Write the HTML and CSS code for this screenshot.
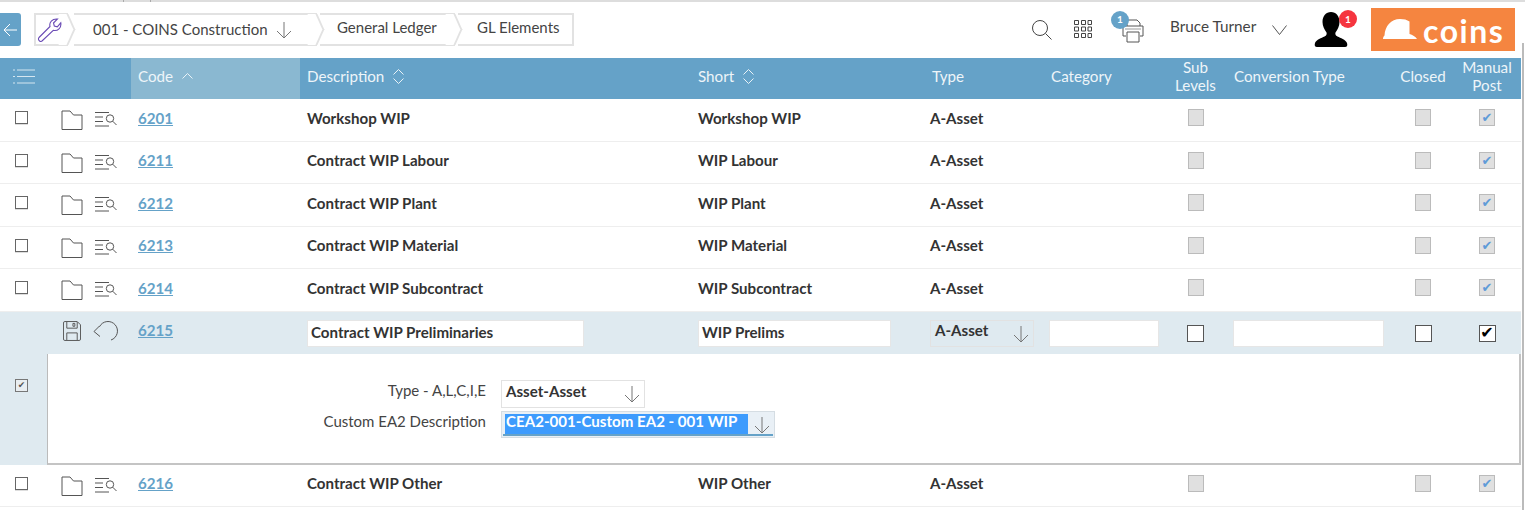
FILE: index.html
```html
<!DOCTYPE html>
<html lang="en">
<head>
  <meta charset="UTF-8">
  <title>GL Elements</title>
  <link rel="stylesheet" href="styles.css">
</head>
<body>

  <svg class="defs" width="0" height="0">
    <symbol id="folder" viewBox="0 0 22 20">
      <path d="M1 19.5V1h8l3.500 4H21v14.500z" fill="none" stroke="#555" stroke-width="1"/>
    </symbol>
    <symbol id="listsearch" viewBox="0 0 22 16">
      <path d="M0 1.500h14M0 6h8M0 10.500h8M0 15h14" fill="none" stroke="#555" stroke-width="1"/>
      <circle cx="15" cy="7.500" r="3.700" fill="none" stroke="#555"/>
      <path d="M17.700 10.200l3.800 3.800" stroke="#555" fill="none"/>
    </symbol>
    <symbol id="arrowdown" viewBox="0 0 16 18">
      <path d="M8 1v16M1 10l7 7 7-7" fill="none" stroke="#777" stroke-width="1"/>
    </symbol>
  </svg>

  <div class="topstrip"></div>
  <div class="pageedge"></div>

  <header class="topbar">
    <a class="backbtn">
      <svg width="14" height="14" viewBox="0 0 14 14"><path d="M14 7H1M7 1L1 7l6 6" fill="none" stroke="#fff"/></svg>
    </a>
    <nav class="crumbs">
      <div class="crumb crumb-tool">
        <svg width="25" height="25" viewBox="0 0 25 25"><path d="M2 20.500L13 9.500C12 5.500 15 1.500 20.500 2L16.500 6l.8 3 3 .8 3.500-4c.8 5-3 8.500-7.500 7.500L5 24c-2 1.500-4.500-1.500-3-3.500z" fill="none" stroke="#6a4bb5" stroke-width="1.100"/></svg>
      </div>
      <div class="crumb crumb-company">
        <span>001 - COINS Construction</span>
        <svg class="crumb-arrow" width="16" height="18"><use href="#arrowdown"/></svg>
      </div>
      <div class="crumb crumb-ledger"><span>General Ledger</span></div>
      <div class="crumb crumb-last"><span>GL Elements</span></div>
    </nav>

    <div class="tools">
      <svg class="tool-search" width="22" height="22" viewBox="0 0 22 22"><circle cx="9" cy="9" r="7.500" fill="none" stroke="#444"/><path d="M14.500 14.500l6 6" stroke="#444" fill="none"/></svg>
      <svg class="tool-grid" width="18" height="18" viewBox="0 0 18 18" fill="none" stroke="#444">
        <path d="M.5.500h4v4h-4zM7.500.500h4v4h-4zM14 .5h3.500v4H14zM.5 7h4v4h-4zM7.500 7h4v4h-4zM14 7h3.500v4H14zM.5 13.500h4v4h-4zM7.500 13.500h4v4h-4zM14 13.500h3.500v4H14z"/>
      </svg>
      <div class="printer">
        <svg width="22" height="24" viewBox="0 0 22 24" fill="none" stroke="#555">
          <path d="M5 7V1h10l3 3v3M4 17H1V7h20v10h-3"/>
          <path d="M5 13h12v10H5z" fill="#fff"/>
          <path d="M3 10h16" stroke="#999"/>
        </svg>
        <span class="printer-badge">1</span>
      </div>
      <div class="username">Bruce Turner</div>
      <svg class="tool-chevron" width="15" height="10" viewBox="0 0 15 10"><path d="M.5.500l7 9 7-9" fill="none" stroke="#555"/></svg>
      <div class="user">
        <svg width="34" height="36" viewBox="0 0 34 36"><path d="M17 0c5 0 8.500 4 8.500 10 0 4-2 8-4 10.500-.5 1.500 0 3 2 4 3 1.500 8 3 9.500 6.500.8 2.500 0 4-2 4H3c-2 0-2.800-1.500-2-4 1.500-3.500 6.500-5 9.500-6.500 2-1 2.500-2.500 2-4-2-2.500-4-6.500-4-10.500C8.500 4 12 0 17 0z" fill="#000"/></svg>
        <span class="user-badge">1</span>
      </div>
      <div class="logo">
        <svg width="34" height="20" viewBox="0 0 34 20"><path d="M0 20c0-1.500.5-2.500 1.500-3.500C2 7 8 0 17 0c4 0 7 .8 9.500 2.500V15c3 1 6 2.500 7.500 5z" fill="#fff"/></svg>
        <span class="logo-text">coins</span>
      </div>
    </div>
  </header>

  <div class="frame">
    <div class="row headrow">
      <div class="cell head-menu">
        <svg width="22" height="15" viewBox="0 0 22 15"><path d="M0 1h2M4 1h18M0 7.500h2M4 7.500h18M0 14h2M4 14h18" stroke="#d5e6f0" fill="none"/></svg>
      </div>
      <div class="cell"></div>
      <div class="cell head-active">Code
        <svg class="sort" width="11" height="6" viewBox="0 0 11 6"><path d="M.5 5.500l5-5 5 5" fill="none" stroke="#e8f2f7"/></svg>
      </div>
      <div class="cell">Description
        <svg class="sort" width="11" height="15" viewBox="0 0 11 15"><path d="M.5 5.500l5-5 5 5M.5 9.500l5 5 5-5" fill="none" stroke="#e8f2f7"/></svg>
      </div>
      <div class="cell">Short
        <svg class="sort" width="11" height="15" viewBox="0 0 11 15"><path d="M.5 5.500l5-5 5 5M.5 9.500l5 5 5-5" fill="none" stroke="#e8f2f7"/></svg>
      </div>
      <div class="cell head-type">Type</div>
      <div class="cell">Category</div>
      <div class="cell cell-mid">Sub<br>Levels</div>
      <div class="cell cell-conv">Conversion Type</div>
      <div class="cell cell-mid">Closed</div>
      <div class="cell cell-mid">Manual<br>Post</div>
    </div>

    <div class="row">
      <div class="cell cell-tick"><span class="check"></span></div>
      <div class="cell cell-actions"><svg class="ic-folder"><use href="#folder"/></svg><svg class="ic-list"><use href="#listsearch"/></svg></div>
      <div class="cell"><a class="code">6201</a></div>
      <div class="cell">Workshop WIP</div>
      <div class="cell">Workshop WIP</div>
      <div class="cell">A-Asset</div>
      <div class="cell"></div>
      <div class="cell cell-mid"><span class="check-off"></span></div>
      <div class="cell"></div>
      <div class="cell cell-mid"><span class="check-off"></span></div>
      <div class="cell cell-mid"><span class="check-off is-on">✔</span></div>
    </div>

    <div class="row">
      <div class="cell cell-tick"><span class="check"></span></div>
      <div class="cell cell-actions"><svg class="ic-folder"><use href="#folder"/></svg><svg class="ic-list"><use href="#listsearch"/></svg></div>
      <div class="cell"><a class="code">6211</a></div>
      <div class="cell">Contract WIP Labour</div>
      <div class="cell">WIP Labour</div>
      <div class="cell">A-Asset</div>
      <div class="cell"></div>
      <div class="cell cell-mid"><span class="check-off"></span></div>
      <div class="cell"></div>
      <div class="cell cell-mid"><span class="check-off"></span></div>
      <div class="cell cell-mid"><span class="check-off is-on">✔</span></div>
    </div>

    <div class="row">
      <div class="cell cell-tick"><span class="check"></span></div>
      <div class="cell cell-actions"><svg class="ic-folder"><use href="#folder"/></svg><svg class="ic-list"><use href="#listsearch"/></svg></div>
      <div class="cell"><a class="code">6212</a></div>
      <div class="cell">Contract WIP Plant</div>
      <div class="cell">WIP Plant</div>
      <div class="cell">A-Asset</div>
      <div class="cell"></div>
      <div class="cell cell-mid"><span class="check-off"></span></div>
      <div class="cell"></div>
      <div class="cell cell-mid"><span class="check-off"></span></div>
      <div class="cell cell-mid"><span class="check-off is-on">✔</span></div>
    </div>

    <div class="row">
      <div class="cell cell-tick"><span class="check"></span></div>
      <div class="cell cell-actions"><svg class="ic-folder"><use href="#folder"/></svg><svg class="ic-list"><use href="#listsearch"/></svg></div>
      <div class="cell"><a class="code">6213</a></div>
      <div class="cell">Contract WIP Material</div>
      <div class="cell">WIP Material</div>
      <div class="cell">A-Asset</div>
      <div class="cell"></div>
      <div class="cell cell-mid"><span class="check-off"></span></div>
      <div class="cell"></div>
      <div class="cell cell-mid"><span class="check-off"></span></div>
      <div class="cell cell-mid"><span class="check-off is-on">✔</span></div>
    </div>

    <div class="row">
      <div class="cell cell-tick"><span class="check"></span></div>
      <div class="cell cell-actions"><svg class="ic-folder"><use href="#folder"/></svg><svg class="ic-list"><use href="#listsearch"/></svg></div>
      <div class="cell"><a class="code">6214</a></div>
      <div class="cell">Contract WIP Subcontract</div>
      <div class="cell">WIP Subcontract</div>
      <div class="cell">A-Asset</div>
      <div class="cell"></div>
      <div class="cell cell-mid"><span class="check-off"></span></div>
      <div class="cell"></div>
      <div class="cell cell-mid"><span class="check-off"></span></div>
      <div class="cell cell-mid"><span class="check-off is-on">✔</span></div>
    </div>

    <div class="row editrow">
      <div class="cell"></div>
      <div class="cell edit-actions">
        <svg width="18" height="20" viewBox="0 0 19 21" fill="none" stroke="#555"><path d="M2 .5h13l3.500 3.500v15a1.500 1.500 0 0 1-1.500 1.500H2A1.500 1.500 0 0 1 .5 19V2A1.500 1.500 0 0 1 2 .5z"/><path d="M4 1v6.500h11V1M4 20v-7.500h11V20M10.500 2.500h2v3h-2z"/></svg>
        <svg width="25" height="21" viewBox="0 0 25 21" fill="none" stroke="#555"><path d="M6.500 5.700A9.500 9.500 0 1 1 18 19M1 10.500L6.500 5M1 10.500L7 15.500"/></svg>
      </div>
      <div class="cell"><a class="code">6215</a></div>
      <div class="cell"><div class="field field-desc">Contract WIP Preliminaries</div></div>
      <div class="cell"><div class="field field-short">WIP Prelims</div></div>
      <div class="cell"><div class="select select-type">A-Asset<svg width="16" height="18"><use href="#arrowdown"/></svg></div></div>
      <div class="cell cell-nudge"><div class="field field-cat"></div></div>
      <div class="cell cell-mid"><span class="check-edit"></span></div>
      <div class="cell cell-conv-edit"><div class="field field-conv"></div></div>
      <div class="cell cell-mid"><span class="check-edit"></span></div>
      <div class="cell cell-mid"><span class="check-edit is-on">✔</span></div>
    </div>

    <div class="detailrow">
      <div class="detail-side"><span class="check-small">✔</span></div>
      <div class="detail">
        <div class="detail-line">
          <label class="detail-label">Type - A,L,C,I,E</label>
          <div class="select select-asset">Asset-Asset<svg width="16" height="18"><use href="#arrowdown"/></svg></div>
        </div>
        <div class="detail-line">
          <label class="detail-label">Custom EA2 Description</label>
          <div class="select select-focus"><span class="selected">CEA2-001-Custom EA2 - 001 WIP</span><svg width="16" height="18"><use href="#arrowdown"/></svg></div>
        </div>
      </div>
    </div>

    <div class="row">
      <div class="cell cell-tick"><span class="check"></span></div>
      <div class="cell cell-actions"><svg class="ic-folder"><use href="#folder"/></svg><svg class="ic-list"><use href="#listsearch"/></svg></div>
      <div class="cell"><a class="code">6216</a></div>
      <div class="cell">Contract WIP Other</div>
      <div class="cell">WIP Other</div>
      <div class="cell">A-Asset</div>
      <div class="cell"></div>
      <div class="cell cell-mid"><span class="check-off"></span></div>
      <div class="cell"></div>
      <div class="cell cell-mid"><span class="check-off"></span></div>
      <div class="cell cell-mid"><span class="check-off is-on">✔</span></div>
    </div>
  </div>

</body>
</html>
```

FILE: styles.css
```css
html, body {
  margin: 0;
  padding: 0;
  height: 510px;
  overflow: hidden;
  background: #fff;
  font-family: "Lato", "Liberation Sans", sans-serif;
  color: #333;
}

.defs {
  position: absolute;
}

.topstrip {
  height: 2px;
  background: linear-gradient(90deg, #ddd 123px, #aaa 123px, #aaa 124px, #ddd 124px, #ddd 150px, #aaa 150px, #aaa 151px, #ddd 151px);
}

.pageedge {
  position: absolute;
  left: 1522px;
  top: 43px;
  bottom: 0;
  width: 2px;
  background: #bbb;
}

/* top bar */
.topbar {
  height: 56px;
  display: flex;
  align-items: flex-start;
  padding-top: 11px;
  box-sizing: border-box;
}

.backbtn {
  width: 21px;
  height: 33px;
  background: #65a2c8;
  border-radius: 0 3px 3px 0;
  display: flex;
  align-items: center;
  justify-content: center;
  flex: none;
  padding-right: 2px;
  box-sizing: border-box;
}

.crumbs {
  display: flex;
  margin-left: 13px;
  height: 33px;
}

.crumb {
  position: relative;
  height: 33px;
  box-sizing: border-box;
  border: 2px solid #e2e2e2;
  border-width: 2px 0;
  display: flex;
  align-items: center;
  font-size: 15px;
  color: #444;
  flex: none;
}

.crumb::before,
.crumb::after {
  content: "";
  position: absolute;
  right: -4px;
  width: 8px;
  height: 16px;
  border-right: 2px solid #e2e2e2;
  background: #fff;
  z-index: 1;
}

.crumb::before {
  top: -1px;
  transform: skewX(24deg);
}

.crumb::after {
  bottom: -1px;
  transform: skewX(-24deg);
}

.crumb-tool {
  width: 34px;
  border-left: 2px solid #e2e2e2;
  padding-left: 1px;
  z-index: 4;
}

.crumb-company {
  width: 243px;
  padding-left: 19px;
  margin-left: 6px;
  z-index: 3;
  padding-bottom: 2px;
}

.crumb-arrow {
  margin-left: 8px;
  margin-top: 3px;
}

.crumb-ledger {
  width: 135px;
  padding-left: 17px;
  margin-left: 3px;
  z-index: 2;
  padding-bottom: 5px;
}

.crumb-last {
  width: 116px;
  padding-left: 19px;
  margin-left: 3px;
  border-right: 2px solid #e2e2e2;
  padding-bottom: 5px;
}

.crumb-last::before,
.crumb-last::after {
  display: none;
}

.crumb span {
  position: relative;
  z-index: 2;
}

.tools {
  margin-left: auto;
  display: flex;
  align-items: flex-start;
  padding-right: 10px;
  margin-top: -5px;
}

.tool-search {
  margin-top: 11px;
}

.tool-grid {
  margin: 12px 0 0 21px;
}

.printer {
  position: relative;
  margin: 11px 0 0 30px;
  width: 22px;
  height: 24px;
}

.printer-badge {
  position: absolute;
  left: -11px;
  top: -8px;
  width: 18px;
  height: 18px;
  border-radius: 50%;
  background: #65a2c8;
  color: #fff;
  font-size: 10px;
  font-weight: 700;
  text-align: center;
  line-height: 17px;
}

.username {
  margin: 9px 0 0 26px;
  font-size: 15.300px;
  width: 102px;
  white-space: nowrap;
  color: #444;
}

.tool-chevron {
  margin-top: 17px;
}

.user {
  position: relative;
  margin: 4px 0 0 27px;
  width: 34px;
  height: 36px;
}

.user-badge {
  position: absolute;
  right: -9px;
  top: -2px;
  width: 18px;
  height: 18px;
  border-radius: 50%;
  background: #f5353f;
  color: #fff;
  font-size: 10px;
  font-weight: 700;
  text-align: center;
  line-height: 18px;
}

.logo {
  margin-left: 23px;
  width: 144px;
  height: 43px;
  background: #f58540;
  display: flex;
  align-items: flex-start;
  padding: 11px 0 0 12px;
  box-sizing: border-box;
  color: #fff;
  flex: none;
}

.logo-text {
  font-size: 32px;
  font-weight: 700;
  line-height: 24px;
  margin-left: 6px;
  letter-spacing: 1.500px;
}

/* grid */
.frame {
  width: 1521px;
  height: 452px;
}

.row {
  display: grid;
  grid-template-columns: 47px 84px 169px 391px 232px 121px 122px 59px 168px 60px 68px;
  height: 42.500px;
  box-sizing: border-box;
  border-bottom: 1px solid #eee;
  font-size: 15.100px;
  font-weight: 700;
}

.cell {
  display: flex;
  align-items: center;
  padding: 0 0 3.600px 7px;
  box-sizing: border-box;
  min-width: 0;
}

.cell-mid {
  justify-content: center;
  text-align: center;
  padding-left: 0;
}

.cell-tick {
  padding-left: 15px;
}

.cell-actions {
  padding-left: 14px;
}

.cell-conv {
  padding-left: 9px;
}

.cell-conv-edit {
  padding-left: 8px;
}

.headrow {
  height: 41px;
  background: #65a2c8;
  color: #eef5f9;
  font-size: 15.200px;
  font-weight: 400;
  border-bottom: 0;
  line-height: 18px;
}

.headrow .cell {
  padding-bottom: 5px;
}

.head-active {
  background: #8ab8d1;
}

.head-menu {
  padding-left: 13px;
}

.head-type {
  padding-left: 9px;
}

.sort {
  margin-left: 9px;
}

.code {
  color: #65a2c8;
  text-decoration: underline;
}

.check {
  width: 13px;
  height: 13px;
  border: 1.500px solid #666;
  box-sizing: border-box;
  box-shadow: 0 1px 0 #ddd;
  flex: none;
}

.check-off {
  width: 16px;
  height: 17px;
  border: 1px solid #bbb;
  background: #e0e0e0;
  box-sizing: border-box;
  color: #5f9bd8;
  font-size: 13px;
  line-height: 15px;
  text-align: center;
  font-family: "DejaVu Sans", sans-serif;
  font-weight: 400;
  flex: none;
}

.ic-folder {
  width: 22px;
  height: 20px;
  margin-top: 5px;
  flex: none;
}

.ic-list {
  width: 22px;
  height: 16px;
  margin: 3px 0 0 12px;
  flex: none;
}

/* row being edited */
.editrow {
  background: #dfeaf0;
  border-bottom: 0;
}

.editrow .cell {
  padding-bottom: 0;
}

.edit-actions {
  padding-left: 16px;
}

.edit-actions svg:first-child {
  margin-bottom: 4px;
}

.edit-actions svg:last-child {
  margin: 0 0 3px 12px;
}

.editrow .code {
  margin-bottom: 5px;
}

.cell-nudge {
  padding-left: 5px;
}

.field {
  height: 27px;
  box-sizing: border-box;
  background: #fff;
  border: 1px solid #e6e6e6;
  padding: 0 3px;
  line-height: 23px;
  margin-top: 1px;
}

.field-desc {
  width: 277px;
}

.field-short {
  width: 193px;
}

.field-cat {
  width: 110px;
}

.field-conv {
  width: 151px;
}

.select {
  position: relative;
  height: 27px;
  box-sizing: border-box;
  border: 1px solid #e2e2e2;
  padding-left: 4px;
  line-height: 18px;
  font-weight: 700;
  font-size: 15.100px;
}

.select svg {
  position: absolute;
  right: 4px;
  top: 4px;
}

.select-type {
  width: 104px;
  background: #dfeaf0;
  margin-top: 1px;
}

.check-edit {
  width: 17px;
  height: 17px;
  border: 1.500px solid #555;
  background: #fff;
  box-sizing: border-box;
  color: #000;
  font-size: 16px;
  line-height: 14px;
  text-align: center;
  font-family: "DejaVu Sans", sans-serif;
  font-weight: 400;
  margin-top: 1px;
  flex: none;
}

/* expanded detail under the edit row */
.detailrow {
  display: flex;
  height: 110.500px;
  background: #dfeaf0;
}

.detail-side {
  width: 47px;
  flex: none;
  padding: 25px 0 0 15px;
  box-sizing: border-box;
}

.check-small {
  display: block;
  width: 13px;
  height: 13px;
  border: 1px solid #777;
  background: #e9eef1;
  box-sizing: border-box;
  color: #555;
  font-size: 9px;
  line-height: 11px;
  text-align: center;
  font-family: "DejaVu Sans", sans-serif;
}

.detail {
  flex: 1;
  background: #fff;
  border-left: 1px solid #bbb;
  border-right: 2px solid #c4c4c4;
  border-bottom: 2px solid #c4c4c4;
  box-sizing: border-box;
  padding-top: 26px;
}

.detail-line {
  display: flex;
  height: 31px;
}

.detail-label {
  width: 438px;
  text-align: right;
  font-size: 15px;
  line-height: 20px;
  flex: none;
  color: #444;
}

.select-asset {
  margin-left: 15px;
  width: 144px;
  height: 28px;
  line-height: 21px;
}

.select-focus {
  margin-left: 15px;
  width: 274px;
  height: 27px;
  background: #e9f0f6;
  border-color: #d5dde3;
  padding-left: 3px;
}

.selected {
  display: block;
  width: 243px;
  height: 20px;
  margin-top: 2px;
  background: #3d9bfd;
  color: #fff;
  padding-left: 1px;
  box-sizing: border-box;
  line-height: 15px;
  white-space: nowrap;
}

.select-focus::after {
  content: "";
  position: absolute;
  left: 1px;
  right: 1px;
  bottom: 1px;
  height: 2px;
  background: #65a2c8;
}
```
